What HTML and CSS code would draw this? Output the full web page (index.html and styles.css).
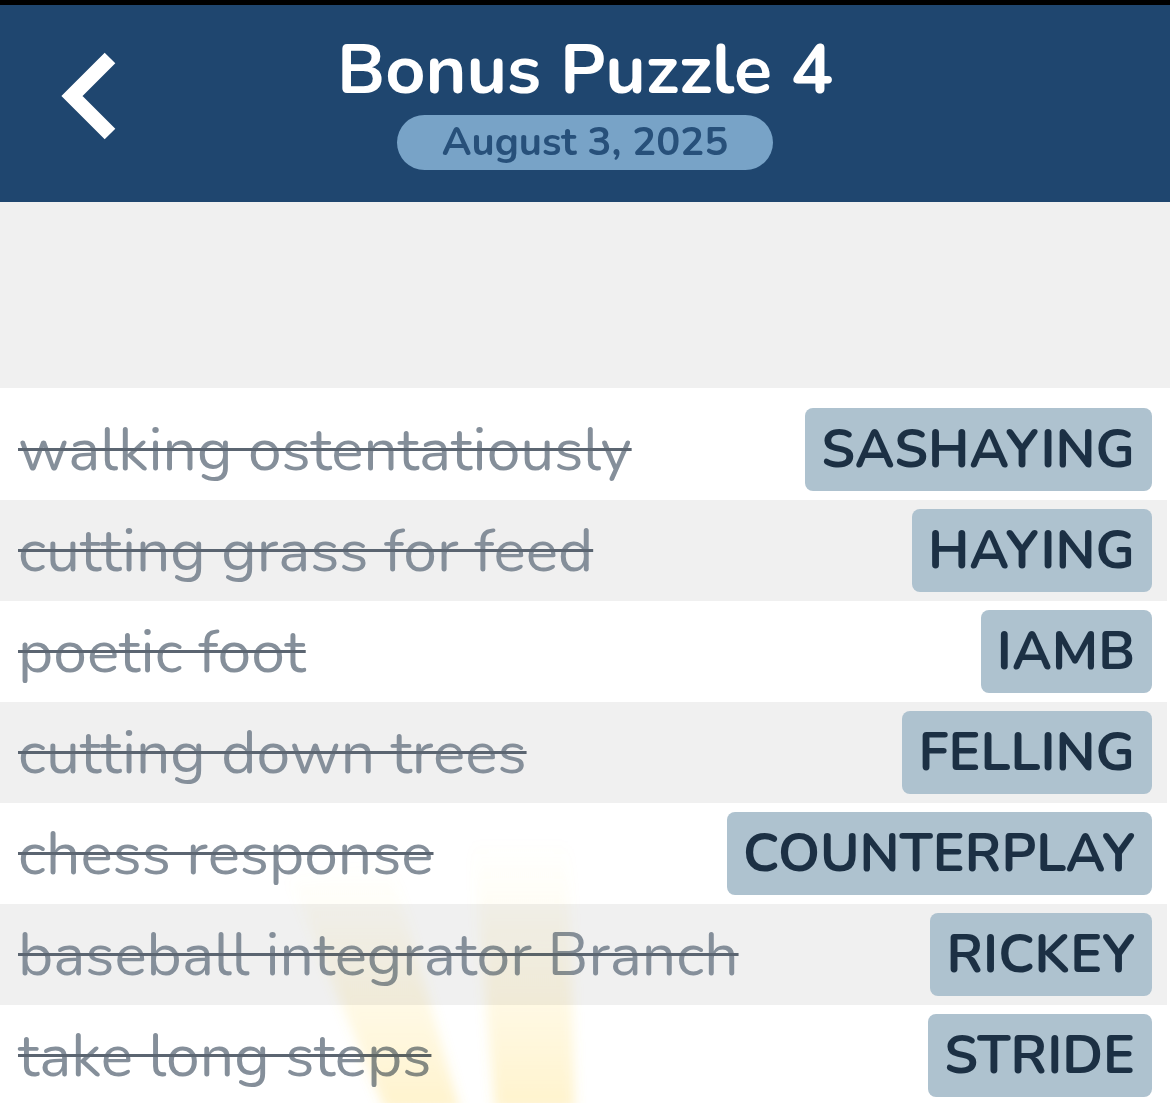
FILE: index.html
```html
<!DOCTYPE html>
<html lang="en">
<head>
  <meta charset="UTF-8">
  <meta name="viewport" content="width=device-width, initial-scale=1.0">
  <title>Bonus Puzzle 4</title>
  <link rel="stylesheet" href="styles.css">
</head>
<body>
  <div class="statusbar"></div>
  <header class="header">
    <button class="back" aria-label="Back">
      <svg width="70" height="100" viewBox="0 0 70 100">
        <polyline points="50,12 12,50 50,88" fill="none" stroke="#fff" stroke-width="15" stroke-linejoin="miter" stroke-linecap="butt"/>
      </svg>
    </button>
    <div class="title-block">
      <h1>Bonus Puzzle 4</h1>
      <div class="date">August 3, 2025</div>
    </div>
    <div></div>
  </header>

  <div class="board"></div>

  <ul class="answers">
    <li class="row"><span class="clue">walking ostentatiously</span><span class="tag">SASHAYING</span></li>
    <li class="row"><span class="clue">cutting grass for feed</span><span class="tag">HAYING</span></li>
    <li class="row"><span class="clue">poetic foot</span><span class="tag">IAMB</span></li>
    <li class="row"><span class="clue">cutting down trees</span><span class="tag">FELLING</span></li>
    <li class="row"><span class="clue">chess response</span><span class="tag">COUNTERPLAY</span></li>
    <li class="row"><span class="clue">baseball integrator Branch</span><span class="tag">RICKEY</span></li>
    <li class="row"><span class="clue">take long steps</span><span class="tag">STRIDE</span></li>
  </ul>

  <!-- faint sunburst glow behind the list -->
  <svg class="rays" width="1170" height="1103" viewBox="0 0 1170 1103">
    <defs>
      <linearGradient id="fade" x1="0" y1="1" x2="0" y2="0">
        <stop offset="0" stop-color="#ffd34a" stop-opacity="0.28"/>
        <stop offset="1" stop-color="#ffe27a" stop-opacity="0"/>
      </linearGradient>
      <filter id="soft" x="-20%" y="-20%" width="140%" height="140%">
        <feGaussianBlur stdDeviation="6"/>
      </filter>
    </defs>
    <g filter="url(#soft)">
      <polygon points="290,880 390,860 460,1110 385,1110" fill="url(#fade)"/>
      <polygon points="472,840 568,840 575,1110 495,1110" fill="url(#fade)"/>
    </g>
  </svg>
</body>
</html>
```

FILE: styles.css
```css
body {
  margin: 0;
  background: #fff;
  font-family: Nunito, Lato, "Noto Sans", sans-serif;
  width: 1170px;
  height: 1103px;
  overflow: hidden;
  position: relative;
}
.statusbar {
  height: 5px;
  background: #000;
}
.header {
  height: 197px;
  background: #1f466f;
  display: grid;
  grid-template-columns: 1fr auto 1fr;
  align-items: start;
}
.back {
  background: none;
  border: none;
  padding: 0;
  margin: 41px 0 0 60px;
  width: 70px;
  height: 100px;
  cursor: pointer;
  justify-self: start;
}
.back svg {
  display: block;
}
.title-block {
  display: flex;
  flex-direction: column;
  align-items: center;
}
h1 {
  margin: 23px 0 0;
  font-size: 70px;
  line-height: 84px;
  font-weight: 700;
  color: #fff;
}
.date {
  margin-top: 3px;
  width: 376px;
  height: 55px;
  line-height: 55px;
  border-radius: 28px;
  background: #78a3c7;
  color: #27507a;
  font-size: 40px;
  font-weight: 700;
  text-align: center;
}
.board {
  height: 186px;
  background: #f0f0f0;
}
.answers {
  list-style: none;
  margin: 0;
  padding: 11px 0 0;
}
.row {
  height: 101px;
  margin-right: 3px;
  padding: 0 15px 0 18px;
  display: flex;
  align-items: center;
  justify-content: space-between;
}
.row:nth-child(even) {
  background: #f0f0f0;
}
.clue {
  font-size: 60.5px;
  color: #858f9a;
  text-decoration: line-through;
  text-decoration-color: #5b6571;
  text-decoration-thickness: 3px;
  white-space: nowrap;
}
.tag {
  height: 83px;
  line-height: 83px;
  padding: 0 17px 0 16px;
  border-radius: 8px;
  background: #aec2cf;
  color: #1c3044;
  font-size: 53.5px;
  font-weight: 700;
}
.rays {
  position: absolute;
  left: 0;
  top: 0;
  pointer-events: none;
  mix-blend-mode: multiply;
}
```
